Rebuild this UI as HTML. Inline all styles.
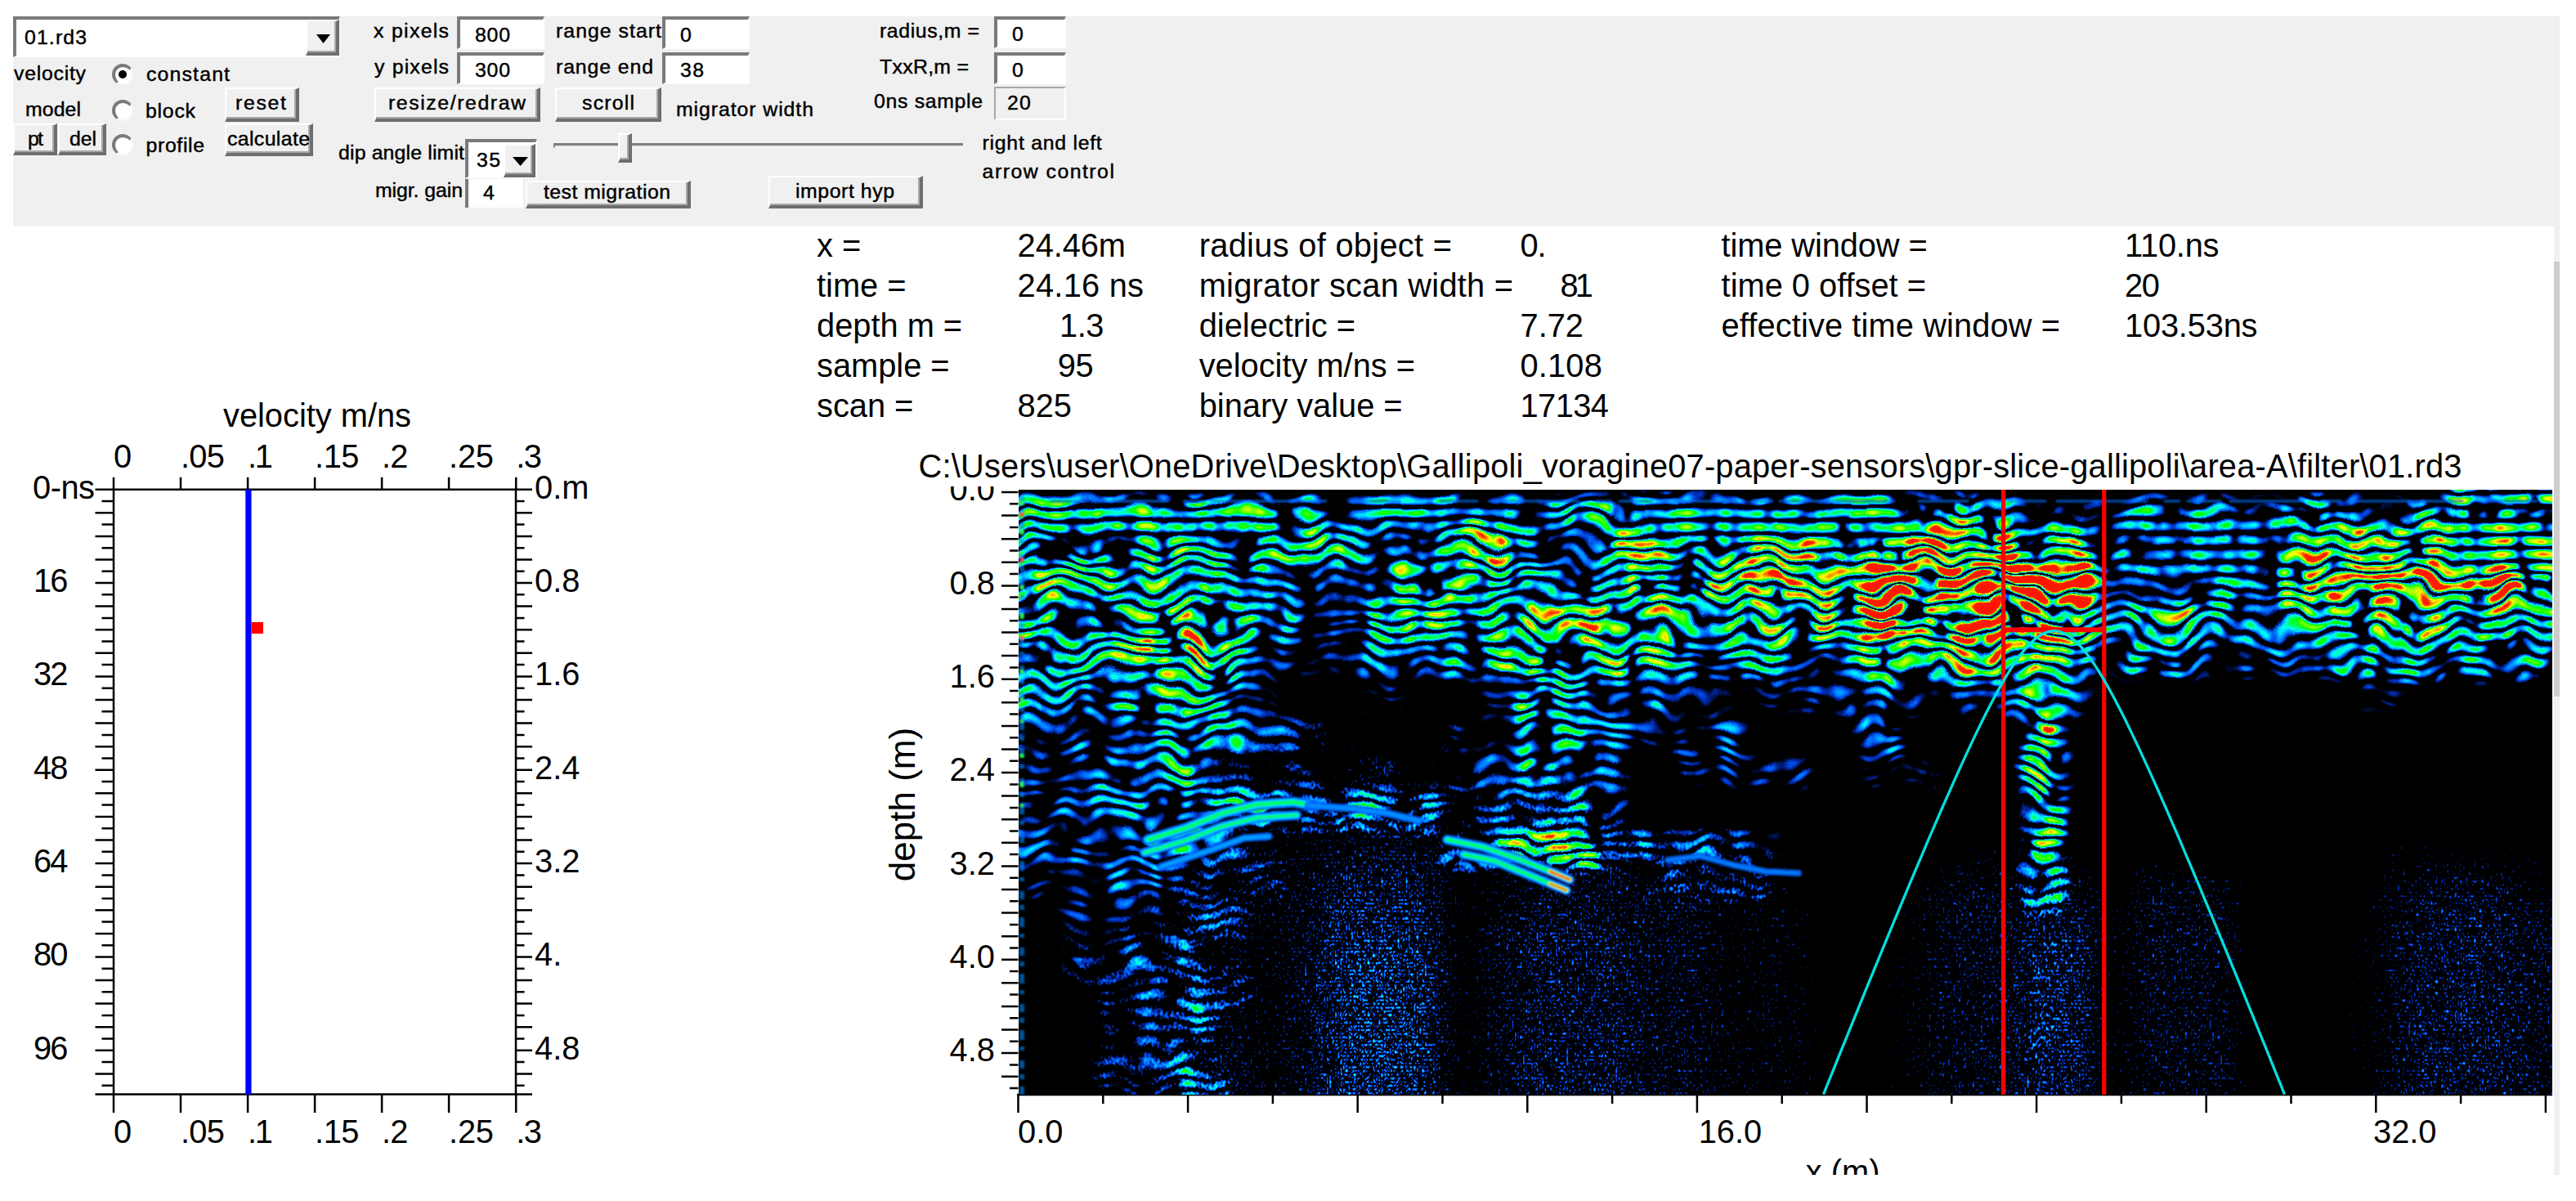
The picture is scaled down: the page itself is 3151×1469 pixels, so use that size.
<!DOCTYPE html>
<html lang="en"><head><meta charset="utf-8"><title>GPR hyperbola velocity analysis</title>
<style>
html,body{margin:0;padding:0;background:#fff;}
body{width:3151px;height:1469px;position:relative;overflow:hidden;font-family:"Liberation Sans",sans-serif;color:#000;}
#app{position:absolute;left:0;top:0;width:3151px;height:1437px;overflow:hidden;background:#fff;}
#panel{position:absolute;left:16px;top:20px;width:3115px;height:257px;background:#f0f0f0;}
.t{position:absolute;line-height:1;white-space:pre;color:#000;}
.p{-webkit-text-stroke:0.45px #000;}

.btn{position:absolute;box-sizing:border-box;background:#f0f0f0;border-style:solid;border-width:2px 4px 4px 2px;border-color:#fff #6e6e6e #6e6e6e #fff;box-shadow:inset -2px -2px 0 #a8a8a8;}
.edit{position:absolute;box-sizing:border-box;background:#fff;border-style:solid;border-width:4px 2px 2px 4px;border-color:#7a7a7a #fff #fff #7a7a7a;}
.lbl{position:absolute;box-sizing:border-box;background:#f0f0f0;border-style:solid;border-width:2px;border-color:#a8a8a8 #fff #fff #a8a8a8;}
.radio{position:absolute;box-sizing:border-box;border-radius:50%;background:#fff;border-style:solid;border-width:4px 2px 2px 4px;border-color:#7a7a7a #f8f8f8 #f8f8f8 #7a7a7a;}
.dot{position:absolute;border-radius:50%;background:#000;}
.abs{position:absolute;}
svg{position:absolute;overflow:hidden;}
svg text{font-family:"Liberation Sans",sans-serif;fill:#000;}
</style></head><body>
<div id="app">
<div id="panel"></div>
<div class="edit" style="left:16.0px;top:20.0px;width:400.0px;height:50.0px;"></div>
<div class="btn" style="left:374.0px;top:24.0px;width:41.0px;height:44.0px;"><svg width="17" height="11" style="left:11px;top:16px" viewBox="0 0 17 11"><path d="M0 0h17l-8.5 11z" fill="#000"/></svg></div>
<span class="t p" style="left:30.0px;top:33.8px;font-size:24.8px;letter-spacing:1.14px;">01.rd3</span>
<span class="t p" style="left:17.0px;top:77.8px;font-size:24.8px;letter-spacing:0.76px;">velocity</span>
<span class="t p" style="left:31.0px;top:122.2px;font-size:24.8px;letter-spacing:0.11px;">model</span>
<div class="radio" style="left:137.0px;top:77.5px;width:26.0px;height:26.0px;"></div>
<div class="dot" style="left:145.0px;top:85.5px;width:10.0px;height:10.0px;"></div>
<div class="radio" style="left:137.0px;top:122.0px;width:26.0px;height:26.0px;"></div>
<div class="radio" style="left:137.0px;top:164.0px;width:26.0px;height:26.0px;"></div>
<span class="t p" style="left:179.0px;top:79.2px;font-size:24.8px;letter-spacing:1.18px;">constant</span>
<span class="t p" style="left:178.0px;top:123.8px;font-size:24.8px;letter-spacing:0.78px;">block</span>
<span class="t p" style="left:178.6px;top:166.2px;font-size:24.8px;letter-spacing:0.64px;">profile</span>
<div class="btn" style="left:275.0px;top:107.0px;width:91.0px;height:42.0px;"></div>
<span class="t p" style="left:288.0px;top:113.8px;font-size:24.8px;letter-spacing:1.72px;">reset</span>
<div class="btn" style="left:275.0px;top:151.0px;width:108.0px;height:40.0px;"></div>
<span class="t p" style="left:278.0px;top:158.2px;font-size:24.8px;letter-spacing:0.39px;">calculate</span>
<div class="btn" style="left:16.0px;top:151.0px;width:54.0px;height:39.0px;"></div>
<span class="t p" style="left:34.0px;top:158.2px;font-size:24.8px;letter-spacing:-1.68px;">pt</span>
<div class="btn" style="left:71.0px;top:151.0px;width:59.0px;height:39.0px;"></div>
<span class="t p" style="left:85.0px;top:158.2px;font-size:24.8px;letter-spacing:-0.05px;">del</span>
<span class="t p" style="left:457.0px;top:25.8px;font-size:24.8px;letter-spacing:1.33px;">x pixels</span>
<span class="t p" style="left:458.0px;top:69.8px;font-size:24.8px;letter-spacing:1.19px;">y pixels</span>
<div class="edit" style="left:559.0px;top:20.0px;width:107.0px;height:40.0px;"></div>
<span class="t p" style="left:581.0px;top:30.6px;font-size:24.8px;letter-spacing:0.81px;">800</span>
<div class="edit" style="left:559.0px;top:64.0px;width:107.0px;height:39.0px;"></div>
<span class="t p" style="left:581.0px;top:74.2px;font-size:24.8px;letter-spacing:0.81px;">300</span>
<span class="t p" style="left:680.0px;top:25.8px;font-size:24.8px;letter-spacing:1.04px;">range start</span>
<span class="t p" style="left:680.0px;top:69.8px;font-size:24.8px;letter-spacing:0.91px;">range end</span>
<div class="edit" style="left:810.0px;top:20.0px;width:107.0px;height:40.0px;"></div>
<span class="t p" style="left:832.0px;top:30.6px;font-size:24.8px;">0</span>
<div class="edit" style="left:810.0px;top:64.0px;width:107.0px;height:39.0px;"></div>
<span class="t p" style="left:832.0px;top:74.2px;font-size:24.8px;letter-spacing:1.41px;">38</span>
<div class="btn" style="left:458.0px;top:107.0px;width:203.0px;height:42.0px;"></div>
<span class="t p" style="left:475.0px;top:114.2px;font-size:24.8px;letter-spacing:1.60px;">resize/redraw</span>
<div class="btn" style="left:679.0px;top:107.0px;width:130.0px;height:42.0px;"></div>
<span class="t p" style="left:712.0px;top:114.2px;font-size:24.8px;letter-spacing:1.23px;">scroll</span>
<span class="t p" style="left:827.0px;top:122.2px;font-size:24.8px;letter-spacing:0.94px;">migrator width</span>
<span class="t p" style="left:1076.0px;top:26.2px;font-size:24.8px;letter-spacing:0.61px;">radius,m =</span>
<span class="t p" style="left:1076.0px;top:70.2px;font-size:24.8px;letter-spacing:0.32px;">TxxR,m =</span>
<span class="t p" style="left:1069.0px;top:112.2px;font-size:24.8px;letter-spacing:0.69px;">0ns sample</span>
<div class="edit" style="left:1215.5px;top:20.0px;width:88.5px;height:39.0px;"></div>
<span class="t p" style="left:1238.0px;top:30.4px;font-size:24.8px;">0</span>
<div class="edit" style="left:1215.5px;top:64.0px;width:88.5px;height:38.6px;"></div>
<span class="t p" style="left:1238.0px;top:74.2px;font-size:24.8px;">0</span>
<div class="lbl" style="left:1215.5px;top:106.0px;width:88.5px;height:41.0px;"></div>
<span class="t p" style="left:1232.0px;top:114.2px;font-size:24.8px;letter-spacing:1.11px;">20</span>
<span class="t p" style="left:414.0px;top:175.2px;font-size:24.8px;letter-spacing:0.17px;">dip angle limit</span>
<div class="edit" style="left:569.0px;top:170.0px;width:88.0px;height:48.0px;"></div>
<div class="btn" style="left:616.0px;top:176.0px;width:39.0px;height:41.0px;"><svg width="19" height="11" style="left:9px;top:14px" viewBox="0 0 19 11"><path d="M0 0h19l-9.5 11z" fill="#000"/></svg></div>
<span class="t p" style="left:583.0px;top:184.2px;font-size:24.8px;letter-spacing:1.41px;">35</span>
<div class="abs" style="left:677.0px;top:175.0px;width:501.0px;height:6.0px;background:#e4e4e4;border-top:3px solid #808080;border-left:2px solid #808080;box-sizing:border-box;border-bottom:1px solid #fff;"></div>
<div class="btn" style="left:756.0px;top:163.0px;width:17.0px;height:36.0px;"></div>
<span class="t p" style="left:1201.6px;top:163.2px;font-size:24.8px;letter-spacing:0.74px;">right and left</span>
<span class="t p" style="left:1201.6px;top:197.5px;font-size:24.8px;letter-spacing:1.50px;">arrow control</span>
<span class="t p" style="left:459.0px;top:221.2px;font-size:24.8px;letter-spacing:-0.06px;">migr. gain</span>
<div class="edit" style="left:569.0px;top:219.0px;width:71.0px;height:35.0px;border-top-width:0;border-bottom-width:0;"></div>
<span class="t p" style="left:591.0px;top:224.2px;font-size:24.8px;">4</span>
<div class="btn" style="left:643.0px;top:221.0px;width:202.0px;height:34.0px;"></div>
<span class="t p" style="left:665.0px;top:223.2px;font-size:24.8px;letter-spacing:0.47px;">test migration</span>
<div class="btn" style="left:940.0px;top:215.0px;width:189.0px;height:40.0px;"></div>
<span class="t p" style="left:973.0px;top:221.6px;font-size:24.8px;letter-spacing:0.58px;">import hyp</span>
<div class="abs" style="left:3124.0px;top:277.0px;width:7.0px;height:1160.0px;background:#f0f0f0;"></div>
<div class="abs" style="left:3124.0px;top:320.0px;width:7.0px;height:532.0px;background:#cdcdcd;"></div>
<span class="t" style="left:999.0px;top:281.3px;font-size:39.8px;">x =</span>
<span class="t" style="left:999.0px;top:330.2px;font-size:39.8px;">time =</span>
<span class="t" style="left:999.0px;top:379.2px;font-size:39.8px;">depth m =</span>
<span class="t" style="left:999.0px;top:428.0px;font-size:39.8px;">sample =</span>
<span class="t" style="left:999.0px;top:477.0px;font-size:39.8px;">scan =</span>
<span class="t" style="left:1244.6px;top:281.3px;font-size:39.8px;letter-spacing:-0.07px;">24.46m</span>
<span class="t" style="left:1244.6px;top:330.2px;font-size:39.8px;letter-spacing:0.25px;">24.16 ns</span>
<span class="t" style="left:1296.0px;top:379.2px;font-size:39.8px;letter-spacing:-0.41px;">1.3</span>
<span class="t" style="left:1293.7px;top:428.0px;font-size:39.8px;letter-spacing:-0.27px;">95</span>
<span class="t" style="left:1244.6px;top:477.0px;font-size:39.8px;letter-spacing:-0.10px;">825</span>
<span class="t" style="left:1466.7px;top:281.3px;font-size:39.8px;letter-spacing:0.30px;">radius of object =</span>
<span class="t" style="left:1466.7px;top:330.2px;font-size:39.8px;letter-spacing:0.25px;">migrator scan width =</span>
<span class="t" style="left:1466.7px;top:379.2px;font-size:39.8px;">dielectric =</span>
<span class="t" style="left:1466.7px;top:428.0px;font-size:39.8px;">velocity m/ns =</span>
<span class="t" style="left:1466.7px;top:477.0px;font-size:39.8px;">binary value =</span>
<span class="t" style="left:1859.5px;top:281.3px;font-size:39.8px;letter-spacing:-1.19px;">0.</span>
<span class="t" style="left:1908.6px;top:330.2px;font-size:39.8px;letter-spacing:-3.87px;">81</span>
<span class="t" style="left:1859.5px;top:379.2px;font-size:39.8px;letter-spacing:0.01px;">7.72</span>
<span class="t" style="left:1859.5px;top:428.0px;font-size:39.8px;letter-spacing:0.18px;">0.108</span>
<span class="t" style="left:1859.5px;top:477.0px;font-size:39.8px;letter-spacing:-0.54px;">17134</span>
<span class="t" style="left:2105.6px;top:281.3px;font-size:39.8px;letter-spacing:-0.10px;">time window =</span>
<span class="t" style="left:2105.6px;top:330.2px;font-size:39.8px;">time 0 offset =</span>
<span class="t" style="left:2105.6px;top:379.2px;font-size:39.8px;letter-spacing:0.12px;">effective time window =</span>
<span class="t" style="left:2599.0px;top:281.3px;font-size:39.8px;letter-spacing:-0.21px;">110.ns</span>
<span class="t" style="left:2599.0px;top:330.2px;font-size:39.8px;letter-spacing:-1.27px;">20</span>
<span class="t" style="left:2599.0px;top:379.2px;font-size:39.8px;letter-spacing:-0.18px;">103.53ns</span>
<svg width="800" height="1000" style="left:0;top:470px" viewBox="0 470 800 1000"><path d="M139 598.7H631V1338.6H139Z" fill="#fff" stroke="#000" stroke-width="2.5"/><path d="M139.0 583.7V598.7M139.0 1338.6V1361.1M221.0 583.7V598.7M221.0 1338.6V1361.1M303.1 583.7V598.7M303.1 1338.6V1361.1M385.1 583.7V598.7M385.1 1338.6V1361.1M467.1 583.7V598.7M467.1 1338.6V1361.1M549.1 583.7V598.7M549.1 1338.6V1361.1M631.2 583.7V598.7M631.2 1338.6V1361.1M116.5 598.7H139M631 598.7H651M124.5 613.0H139M631 613.0H641.5M116.5 627.3H139M631 627.3H651M124.5 641.6H139M631 641.6H641.5M116.5 655.9H139M631 655.9H651M124.5 670.2H139M631 670.2H641.5M116.5 684.5H139M631 684.5H651M124.5 698.8H139M631 698.8H641.5M116.5 713.1H139M631 713.1H651M124.5 727.3H139M631 727.3H641.5M116.5 741.6H139M631 741.6H651M124.5 755.9H139M631 755.9H641.5M116.5 770.2H139M631 770.2H651M124.5 784.5H139M631 784.5H641.5M116.5 798.8H139M631 798.8H651M124.5 813.1H139M631 813.1H641.5M116.5 827.4H139M631 827.4H651M124.5 841.7H139M631 841.7H641.5M116.5 856.0H139M631 856.0H651M124.5 870.3H139M631 870.3H641.5M116.5 884.6H139M631 884.6H651M124.5 898.9H139M631 898.9H641.5M116.5 913.2H139M631 913.2H651M124.5 927.5H139M631 927.5H641.5M116.5 941.8H139M631 941.8H651M124.5 956.1H139M631 956.1H641.5M116.5 970.3H139M631 970.3H651M124.5 984.6H139M631 984.6H641.5M116.5 998.9H139M631 998.9H651M124.5 1013.2H139M631 1013.2H641.5M116.5 1027.5H139M631 1027.5H651M124.5 1041.8H139M631 1041.8H641.5M116.5 1056.1H139M631 1056.1H651M124.5 1070.4H139M631 1070.4H641.5M116.5 1084.7H139M631 1084.7H651M124.5 1099.0H139M631 1099.0H641.5M116.5 1113.3H139M631 1113.3H651M124.5 1127.6H139M631 1127.6H641.5M116.5 1141.9H139M631 1141.9H651M124.5 1156.2H139M631 1156.2H641.5M116.5 1170.5H139M631 1170.5H651M124.5 1184.8H139M631 1184.8H641.5M116.5 1199.0H139M631 1199.0H651M124.5 1213.3H139M631 1213.3H641.5M116.5 1227.6H139M631 1227.6H651M124.5 1241.9H139M631 1241.9H641.5M116.5 1256.2H139M631 1256.2H651M124.5 1270.5H139M631 1270.5H641.5M116.5 1284.8H139M631 1284.8H651M124.5 1299.1H139M631 1299.1H641.5M116.5 1313.4H139M631 1313.4H651M124.5 1327.7H139M631 1327.7H641.5M116.5 1338.6H139M631 1338.6H651" stroke="#000" stroke-width="2.5" fill="none"/><rect x="300.3" y="598.7" width="7.2" height="739.9" fill="#0000ff"/><rect x="307.5" y="761" width="14.5" height="14" fill="#ff0000"/></svg>
<span class="t" style="left:273.0px;top:489.1px;font-size:39.8px;letter-spacing:-0.00px;">velocity m/ns</span>
<span class="t" style="left:139.0px;top:538.8px;font-size:39.8px;">0</span>
<span class="t" style="left:139.0px;top:1365.1px;font-size:39.8px;">0</span>
<span class="t" style="left:221.0px;top:538.8px;font-size:39.8px;letter-spacing:-0.78px;">.05</span>
<span class="t" style="left:221.0px;top:1365.1px;font-size:39.8px;letter-spacing:-0.78px;">.05</span>
<span class="t" style="left:303.1px;top:538.8px;font-size:39.8px;letter-spacing:-2.45px;">.1</span>
<span class="t" style="left:303.1px;top:1365.1px;font-size:39.8px;letter-spacing:-2.45px;">.1</span>
<span class="t" style="left:385.1px;top:538.8px;font-size:39.8px;letter-spacing:-0.51px;">.15</span>
<span class="t" style="left:385.1px;top:1365.1px;font-size:39.8px;letter-spacing:-0.51px;">.15</span>
<span class="t" style="left:467.1px;top:538.8px;font-size:39.8px;letter-spacing:-0.91px;">.2</span>
<span class="t" style="left:467.1px;top:1365.1px;font-size:39.8px;letter-spacing:-0.91px;">.2</span>
<span class="t" style="left:549.1px;top:538.8px;font-size:39.8px;letter-spacing:-0.24px;">.25</span>
<span class="t" style="left:549.1px;top:1365.1px;font-size:39.8px;letter-spacing:-0.24px;">.25</span>
<span class="t" style="left:631.2px;top:538.8px;font-size:39.8px;letter-spacing:-1.37px;">.3</span>
<span class="t" style="left:631.2px;top:1365.1px;font-size:39.8px;letter-spacing:-1.37px;">.3</span>
<span class="t" style="left:40.0px;top:577.3px;font-size:39.8px;letter-spacing:-0.47px;">0-ns</span>
<span class="t" style="left:41.0px;top:690.9px;font-size:39.8px;letter-spacing:-1.77px;">16</span>
<span class="t" style="left:41.0px;top:805.2px;font-size:39.8px;letter-spacing:-1.77px;">32</span>
<span class="t" style="left:41.0px;top:919.6px;font-size:39.8px;letter-spacing:-1.77px;">48</span>
<span class="t" style="left:41.0px;top:1033.9px;font-size:39.8px;letter-spacing:-1.77px;">64</span>
<span class="t" style="left:41.0px;top:1148.3px;font-size:39.8px;letter-spacing:-1.77px;">80</span>
<span class="t" style="left:41.0px;top:1262.6px;font-size:39.8px;letter-spacing:-1.77px;">96</span>
<span class="t" style="left:654.0px;top:577.3px;font-size:39.8px;">0.m</span>
<span class="t" style="left:654.0px;top:690.9px;font-size:39.8px;">0.8</span>
<span class="t" style="left:654.0px;top:805.2px;font-size:39.8px;">1.6</span>
<span class="t" style="left:654.0px;top:919.6px;font-size:39.8px;">2.4</span>
<span class="t" style="left:654.0px;top:1033.9px;font-size:39.8px;">3.2</span>
<span class="t" style="left:654.0px;top:1148.3px;font-size:39.8px;">4.</span>
<span class="t" style="left:654.0px;top:1262.6px;font-size:39.8px;">4.8</span>
<svg width="2100" height="900" style="left:1100px;top:560px" viewBox="1100 560 2100 900"><path d="M1225 602.0H1245.5M1235 616.3H1245.5M1225 630.6H1245.5M1235 644.9H1245.5M1225 659.2H1245.5M1235 673.5H1245.5M1225 687.8H1245.5M1235 702.1H1245.5M1225 716.4H1245.5M1235 730.6H1245.5M1225 744.9H1245.5M1235 759.2H1245.5M1225 773.5H1245.5M1235 787.8H1245.5M1225 802.1H1245.5M1235 816.4H1245.5M1225 830.7H1245.5M1235 845.0H1245.5M1225 859.3H1245.5M1235 873.6H1245.5M1225 887.9H1245.5M1235 902.2H1245.5M1225 916.5H1245.5M1235 930.8H1245.5M1225 945.1H1245.5M1235 959.4H1245.5M1225 973.6H1245.5M1235 987.9H1245.5M1225 1002.2H1245.5M1235 1016.5H1245.5M1225 1030.8H1245.5M1235 1045.1H1245.5M1225 1059.4H1245.5M1235 1073.7H1245.5M1225 1088.0H1245.5M1235 1102.3H1245.5M1225 1116.6H1245.5M1235 1130.9H1245.5M1225 1145.2H1245.5M1235 1159.5H1245.5M1225 1173.8H1245.5M1235 1188.1H1245.5M1225 1202.3H1245.5M1235 1216.6H1245.5M1225 1230.9H1245.5M1235 1245.2H1245.5M1225 1259.5H1245.5M1235 1273.8H1245.5M1225 1288.1H1245.5M1235 1302.4H1245.5M1225 1316.7H1245.5M1235 1331.0H1245.5M1245.5 1338.6V1361.1M1349.3 1338.6V1350.1M1453.1 1338.6V1361.1M1556.9 1338.6V1350.1M1660.7 1338.6V1361.1M1764.5 1338.6V1350.1M1868.3 1338.6V1361.1M1972.1 1338.6V1350.1M2075.9 1338.6V1361.1M2179.7 1338.6V1350.1M2283.5 1338.6V1361.1M2387.3 1338.6V1350.1M2491.1 1338.6V1361.1M2594.9 1338.6V1350.1M2698.7 1338.6V1361.1M2802.5 1338.6V1350.1M2906.3 1338.6V1361.1M3010.1 1338.6V1350.1M3113.9 1338.6V1361.1M1244.0 1339.1H3122" stroke="#000" stroke-width="2.5" fill="none"/></svg>
<span class="t" style="left:1161.4px;top:579.1px;font-size:39.8px;letter-spacing:0.14px;">0.0</span>
<span class="t" style="left:1161.4px;top:693.5px;font-size:39.8px;letter-spacing:0.14px;">0.8</span>
<span class="t" style="left:1161.4px;top:807.8px;font-size:39.8px;letter-spacing:0.14px;">1.6</span>
<span class="t" style="left:1161.4px;top:922.2px;font-size:39.8px;letter-spacing:0.14px;">2.4</span>
<span class="t" style="left:1161.4px;top:1036.5px;font-size:39.8px;letter-spacing:0.14px;">3.2</span>
<span class="t" style="left:1161.4px;top:1150.9px;font-size:39.8px;letter-spacing:0.14px;">4.0</span>
<span class="t" style="left:1161.4px;top:1265.2px;font-size:39.8px;letter-spacing:0.14px;">4.8</span>
<div class="abs" style="left:1120.0px;top:550.0px;width:2003.0px;height:44.7px;background:#fff;"></div>
<span class="t" style="left:1123.6px;top:550.9px;font-size:39.8px;letter-spacing:0.20px;">C:\Users\user\OneDrive\Desktop\Gallipoli_voragine07-paper-sensors\gpr-slice-gallipoli\area-A\filter\01.rd3</span>
<span class="t" style="left:1245.0px;top:1364.9px;font-size:39.8px;">0.0</span>
<span class="t" style="left:2077.7px;top:1364.9px;font-size:39.8px;">16.0</span>
<span class="t" style="left:2903.0px;top:1364.9px;font-size:39.8px;">32.0</span>
<span class="t" style="left:2208.7px;top:1414.3px;font-size:39.8px;letter-spacing:0.04px;">x (m)</span>
<span class="t" style="left:1104px;top:983.7px;font-size:44px;transform:translate(-50%,-50%) rotate(-90deg);">depth (m)</span>
<svg width="1876.5" height="739.9" style="left:1245.5px;top:598.7px;background:#000" viewBox="0 0 1876.5 739.9"><defs><filter id="gpr" filterUnits="userSpaceOnUse" x="-100" y="-100" width="2076.5" height="939.9" color-interpolation-filters="sRGB">
<feGaussianBlur in="SourceGraphic" stdDeviation="12 8" result="env"/>
<feColorMatrix in="env" type="matrix" values="1 0 0 0 0 1 0 0 0 0 1 0 0 0 0 0 0 0 0 1" result="e1"/>
<feColorMatrix in="env" type="matrix" values="0 1 0 0 0 0 1 0 0 0 0 1 0 0 0 0 0 0 0 1" result="e2a"/>
<feGaussianBlur in="e2a" stdDeviation="16 22" result="e2"/>
<feFlood flood-color="#fff" x="-100" y="-100" width="2076.5" height="17.5" result="f"/>
<feOffset in="f" dx="0" dy="0" x="-100" y="-100" width="2076.5" height="35.0" result="cell"/>
<feTile in="cell" result="tile"/>
<feColorMatrix in="tile" type="matrix" values="1 0 0 0 0 1 0 0 0 0 1 0 0 0 0 0 0 0 0 1" result="sq"/>
<feGaussianBlur in="sq" stdDeviation="0 5" result="sn0"/>
<feComponentTransfer in="sn0" result="sn"><feFuncR type="table" tableValues="0.000 0.042 0.082 0.121 0.158 0.193 0.227 0.260 0.290 0.319 0.346 0.371 0.395 0.416 0.435 0.453 0.468 0.480 0.490 0.497 0.500 0.503 0.510 0.520 0.532 0.547 0.565 0.584 0.605 0.629 0.654 0.681 0.710 0.740 0.773 0.807 0.842 0.879 0.918 0.958 1.000"/><feFuncG type="table" tableValues="0.000 0.042 0.082 0.121 0.158 0.193 0.227 0.260 0.290 0.319 0.346 0.371 0.395 0.416 0.435 0.453 0.468 0.480 0.490 0.497 0.500 0.503 0.510 0.520 0.532 0.547 0.565 0.584 0.605 0.629 0.654 0.681 0.710 0.740 0.773 0.807 0.842 0.879 0.918 0.958 1.000"/><feFuncB type="table" tableValues="0.000 0.042 0.082 0.121 0.158 0.193 0.227 0.260 0.290 0.319 0.346 0.371 0.395 0.416 0.435 0.453 0.468 0.480 0.490 0.497 0.500 0.503 0.510 0.520 0.532 0.547 0.565 0.584 0.605 0.629 0.654 0.681 0.710 0.740 0.773 0.807 0.842 0.879 0.918 0.958 1.000"/></feComponentTransfer>
<feTurbulence type="fractalNoise" baseFrequency="0.016 0.012" numOctaves="2" seed="3" result="d"/>
<feColorMatrix in="d" type="matrix" values="1 0 0 0 0 0 1 0 0 0 0 0 1 0 0 0 0 0 0 1" result="dO"/>
<feColorMatrix in="env" type="matrix" values="0 0 -1 0 1 0 0 -1 0 1 0 0 -1 0 1 0 0 0 0 1" result="fm"/>
<feComposite in="dO" in2="fm" operator="arithmetic" k1="1" k2="0" k3="-0.5" k4="0.5" result="dF"/>
<feDisplacementMap in="sn" in2="dF" scale="55" xChannelSelector="G" yChannelSelector="R" result="t1d"/>
<feColorMatrix in="t1d" type="matrix" values="1 0 0 0 0 1 0 0 0 0 1 0 0 0 0 0 0 0 0 1" result="n1"/>
<feTurbulence type="fractalNoise" baseFrequency="0.035 0.022" numOctaves="2" seed="5" result="tm"/>
<feColorMatrix in="tm" type="matrix" values="2 0 0 0 -0.5 2 0 0 0 -0.5 2 0 0 0 -0.5 0 0 0 0 1" result="m"/>
<feComposite in="e1" in2="m" operator="arithmetic" k1="1" k2="0" k3="0" k4="0" result="e1m"/>
<feTurbulence type="fractalNoise" baseFrequency="0.3 0.22" numOctaves="1" seed="11" result="t2"/>
<feColorMatrix in="t2" type="matrix" values="1 0 0 0 0 1 0 0 0 0 1 0 0 0 0 0 0 0 0 1" result="n2"/>
<feComposite in="n1" in2="e1m" operator="arithmetic" k1="1.65" k2="0" k3="-0.825" k4="0.5" result="s1"/>
<feComposite in="n2" in2="e2" operator="arithmetic" k1="3.0" k2="0" k3="-1.5" k4="0.5" result="s2"/>
<feComposite in="s1" in2="s2" operator="arithmetic" k1="0" k2="1" k3="1" k4="-0.5" result="s"/>
<feComponentTransfer in="s"><feFuncR type="table" tableValues="1 1 1 1 1 1 1 1 1 1 1 1 1 1 1 1 1 1 1 1 1 1 1 1 1 1 1 1 1 1 1 1 1 1 1 1 1 1 1 1 1 1 1 1 1 1 1 1 1 1 1 1 1 1 1 1 1 1 1 1 1 1 1 1 1 1 1 0.925 0.851 0.776 0.702 0.627 0.549 0.471 0.392 0.314 0.235 0.157 0.078 0 0 0 0 0 0 0 0 0 0 0 0 0 0 0 0 0 0 0 0 0 0 0 0 0 0 0 0 0 0 0 0 0 0 0 0 0 0 0 0 0 0 0 0.078 0.157 0.235 0.314 0.392 0.471 0.549 0.627 0.702 0.776 0.851 0.925 1 1 1 1 1 1 1 1 1 1 1 1 1 1 1 1 1 1 1 1 1 1 1 1 1 1 1 1 1 1 1 1 1 1 1 1 1 1 1 1 1 1 1 1 1 1 1 1 1 1 1 1 1 1 1 1 1 1 1 1 1 1 1 1 1 1 1"/><feFuncG type="table" tableValues="0.078 0.079 0.08 0.081 0.081 0.082 0.083 0.084 0.084 0.085 0.086 0.087 0.087 0.088 0.089 0.09 0.09 0.091 0.092 0.092 0.093 0.094 0.095 0.095 0.096 0.097 0.098 0.098 0.099 0.1 0.101 0.101 0.102 0.103 0.104 0.104 0.105 0.106 0.107 0.107 0.108 0.109 0.11 0.11 0.111 0.112 0.112 0.113 0.114 0.115 0.115 0.116 0.117 0.118 0.179 0.241 0.303 0.364 0.426 0.487 0.549 0.624 0.699 0.775 0.85 0.925 1 1 1 1 1 1 1 1 1 1 1 1 1 1 1 1 1 1 1 1 1 0.892 0.784 0.675 0.566 0.458 0.353 0.255 0.157 0.092 0.026 0 0 0 0 0 0 0 0.026 0.092 0.157 0.255 0.353 0.458 0.566 0.675 0.784 0.892 1 1 1 1 1 1 1 1 1 1 1 1 1 1 1 1 1 1 1 1 1 0.925 0.85 0.775 0.699 0.624 0.549 0.487 0.426 0.364 0.303 0.241 0.179 0.118 0.117 0.116 0.115 0.115 0.114 0.113 0.112 0.112 0.111 0.11 0.11 0.109 0.108 0.107 0.107 0.106 0.105 0.104 0.104 0.103 0.102 0.101 0.101 0.1 0.099 0.098 0.098 0.097 0.096 0.095 0.095 0.094 0.093 0.092 0.092 0.091 0.09 0.09 0.089 0.088 0.087 0.087 0.086 0.085 0.084 0.084 0.083 0.082 0.081 0.081 0.08 0.079 0.078"/><feFuncB type="table" tableValues="0 0 0 0 0 0 0 0 0 0 0 0 0 0 0 0 0 0 0 0 0 0 0 0 0 0 0 0 0 0 0 0 0 0 0 0 0 0 0 0 0 0 0 0 0 0 0 0 0 0 0 0 0 0 0 0 0 0 0 0 0 0 0 0 0 0 0 0 0 0 0 0 0 0 0 0 0 0 0 0 0.115 0.231 0.346 0.493 0.662 0.831 1 1 1 1 1 1 0.944 0.806 0.667 0.389 0.111 0 0 0 0 0 0 0 0.111 0.389 0.667 0.806 0.944 1 1 1 1 1 1 0.831 0.662 0.493 0.346 0.231 0.115 0 0 0 0 0 0 0 0 0 0 0 0 0 0 0 0 0 0 0 0 0 0 0 0 0 0 0 0 0 0 0 0 0 0 0 0 0 0 0 0 0 0 0 0 0 0 0 0 0 0 0 0 0 0 0 0 0 0 0 0 0 0 0 0 0 0 0 0 0 0 0 0 0 0 0 0 0 0 0 0"/></feComponentTransfer>
</filter><filter id="soft"><feGaussianBlur stdDeviation="1.3"/></filter></defs><g filter="url(#gpr)"><rect x="-100" y="-100" width="2076" height="940" fill="#000"/><rect x="-100" y="10" width="194" height="36" fill="rgb(66,0,0)"/><rect x="94" y="10" width="47" height="36" fill="rgb(89,0,0)"/><rect x="141" y="10" width="188" height="36" fill="rgb(46,0,0)"/><rect x="328" y="10" width="47" height="36" fill="rgb(66,0,0)"/><rect x="375" y="10" width="141" height="36" fill="rgb(28,0,0)"/><rect x="516" y="10" width="47" height="36" fill="rgb(46,0,0)"/><rect x="563" y="10" width="47" height="36" fill="rgb(66,0,0)"/><rect x="610" y="10" width="47" height="36" fill="rgb(28,0,0)"/><rect x="657" y="10" width="47" height="36" fill="rgb(46,0,0)"/><rect x="704" y="10" width="281" height="36" fill="rgb(89,0,0)"/><rect x="985" y="10" width="47" height="36" fill="rgb(46,0,0)"/><rect x="1032" y="10" width="47" height="36" fill="rgb(66,0,0)"/><rect x="1079" y="10" width="47" height="36" fill="rgb(89,0,0)"/><rect x="1126" y="10" width="47" height="36" fill="rgb(115,0,0)"/><rect x="1173" y="10" width="47" height="36" fill="rgb(46,0,0)"/><rect x="1220" y="10" width="94" height="36" fill="rgb(28,0,0)"/><rect x="1314" y="10" width="47" height="36" fill="rgb(17,0,0)"/><rect x="1360" y="10" width="141" height="36" fill="rgb(46,0,0)"/><rect x="1501" y="10" width="47" height="36" fill="rgb(28,0,0)"/><rect x="1548" y="10" width="94" height="36" fill="rgb(66,0,0)"/><rect x="1642" y="10" width="47" height="36" fill="rgb(28,0,0)"/><rect x="1689" y="10" width="94" height="36" fill="rgb(66,0,0)"/><rect x="1783" y="10" width="194" height="36" fill="rgb(89,0,0)"/><rect x="-100" y="46" width="147" height="46" fill="rgb(66,0,0)"/><rect x="47" y="46" width="47" height="46" fill="rgb(89,0,0)"/><rect x="94" y="46" width="47" height="46" fill="rgb(46,0,0)"/><rect x="141" y="46" width="94" height="46" fill="rgb(66,0,0)"/><rect x="235" y="46" width="47" height="46" fill="rgb(46,0,0)"/><rect x="281" y="46" width="141" height="46" fill="rgb(66,0,0)"/><rect x="422" y="46" width="94" height="46" fill="rgb(46,0,0)"/><rect x="516" y="46" width="47" height="46" fill="rgb(89,0,0)"/><rect x="563" y="46" width="47" height="46" fill="rgb(115,0,0)"/><rect x="610" y="46" width="47" height="46" fill="rgb(46,0,0)"/><rect x="657" y="46" width="47" height="46" fill="rgb(28,0,0)"/><rect x="704" y="46" width="94" height="46" fill="rgb(89,0,0)"/><rect x="798" y="46" width="47" height="46" fill="rgb(46,0,0)"/><rect x="844" y="46" width="47" height="46" fill="rgb(89,0,0)"/><rect x="891" y="46" width="47" height="46" fill="rgb(143,0,0)"/><rect x="938" y="46" width="47" height="46" fill="rgb(115,0,0)"/><rect x="985" y="46" width="47" height="46" fill="rgb(89,0,0)"/><rect x="1032" y="46" width="47" height="46" fill="rgb(191,0,0)"/><rect x="1079" y="46" width="94" height="46" fill="rgb(143,0,0)"/><rect x="1173" y="46" width="47" height="46" fill="rgb(191,0,0)"/><rect x="1220" y="46" width="47" height="46" fill="rgb(66,0,0)"/><rect x="1267" y="46" width="47" height="46" fill="rgb(89,0,0)"/><rect x="1314" y="46" width="47" height="46" fill="rgb(28,0,0)"/><rect x="1360" y="46" width="141" height="46" fill="rgb(66,0,0)"/><rect x="1501" y="46" width="47" height="46" fill="rgb(46,0,0)"/><rect x="1548" y="46" width="47" height="46" fill="rgb(89,0,0)"/><rect x="1595" y="46" width="381" height="46" fill="rgb(115,0,0)"/><rect x="-100" y="92" width="147" height="46" fill="rgb(89,0,0)"/><rect x="47" y="92" width="47" height="46" fill="rgb(46,0,0)"/><rect x="94" y="92" width="94" height="46" fill="rgb(66,0,0)"/><rect x="188" y="92" width="47" height="46" fill="rgb(89,0,0)"/><rect x="235" y="92" width="141" height="46" fill="rgb(46,0,0)"/><rect x="375" y="92" width="47" height="46" fill="rgb(28,0,0)"/><rect x="422" y="92" width="47" height="46" fill="rgb(66,0,0)"/><rect x="469" y="92" width="94" height="46" fill="rgb(89,0,0)"/><rect x="563" y="92" width="94" height="46" fill="rgb(66,0,0)"/><rect x="657" y="92" width="47" height="46" fill="rgb(46,0,0)"/><rect x="704" y="92" width="47" height="46" fill="rgb(66,0,0)"/><rect x="751" y="92" width="47" height="46" fill="rgb(115,0,0)"/><rect x="798" y="92" width="47" height="46" fill="rgb(66,0,0)"/><rect x="844" y="92" width="47" height="46" fill="rgb(115,0,0)"/><rect x="891" y="92" width="47" height="46" fill="rgb(143,0,0)"/><rect x="938" y="92" width="47" height="46" fill="rgb(115,0,0)"/><rect x="985" y="92" width="47" height="46" fill="rgb(89,0,0)"/><rect x="1032" y="92" width="47" height="46" fill="rgb(255,0,0)"/><rect x="1079" y="92" width="47" height="46" fill="rgb(143,0,0)"/><rect x="1126" y="92" width="47" height="46" fill="rgb(191,0,0)"/><rect x="1173" y="92" width="141" height="46" fill="rgb(255,0,0)"/><rect x="1314" y="92" width="141" height="46" fill="rgb(28,0,0)"/><rect x="1454" y="92" width="94" height="46" fill="rgb(46,0,0)"/><rect x="1548" y="92" width="47" height="46" fill="rgb(143,0,0)"/><rect x="1595" y="92" width="94" height="46" fill="rgb(115,0,0)"/><rect x="1689" y="92" width="47" height="46" fill="rgb(143,0,0)"/><rect x="1736" y="92" width="47" height="46" fill="rgb(115,0,0)"/><rect x="1783" y="92" width="47" height="46" fill="rgb(191,0,0)"/><rect x="1830" y="92" width="147" height="46" fill="rgb(143,0,0)"/><rect x="-100" y="139" width="147" height="46" fill="rgb(66,0,0)"/><rect x="47" y="139" width="47" height="46" fill="rgb(46,0,0)"/><rect x="94" y="139" width="47" height="46" fill="rgb(66,0,0)"/><rect x="141" y="139" width="47" height="46" fill="rgb(89,0,0)"/><rect x="188" y="139" width="47" height="46" fill="rgb(115,0,0)"/><rect x="235" y="139" width="47" height="46" fill="rgb(89,0,0)"/><rect x="281" y="139" width="47" height="46" fill="rgb(46,0,0)"/><rect x="328" y="139" width="47" height="46" fill="rgb(28,0,0)"/><rect x="375" y="139" width="47" height="46" fill="rgb(17,0,0)"/><rect x="422" y="139" width="47" height="46" fill="rgb(66,0,0)"/><rect x="469" y="139" width="47" height="46" fill="rgb(89,0,0)"/><rect x="516" y="139" width="47" height="46" fill="rgb(46,0,0)"/><rect x="563" y="139" width="47" height="46" fill="rgb(66,0,0)"/><rect x="610" y="139" width="94" height="46" fill="rgb(89,0,0)"/><rect x="704" y="139" width="47" height="46" fill="rgb(115,0,0)"/><rect x="751" y="139" width="47" height="46" fill="rgb(89,0,0)"/><rect x="798" y="139" width="94" height="46" fill="rgb(66,0,0)"/><rect x="891" y="139" width="47" height="46" fill="rgb(115,0,0)"/><rect x="938" y="139" width="94" height="46" fill="rgb(89,0,0)"/><rect x="1032" y="139" width="47" height="46" fill="rgb(255,0,0)"/><rect x="1079" y="139" width="47" height="46" fill="rgb(143,0,0)"/><rect x="1126" y="139" width="47" height="46" fill="rgb(191,0,0)"/><rect x="1173" y="139" width="94" height="46" fill="rgb(255,0,0)"/><rect x="1267" y="139" width="47" height="46" fill="rgb(191,0,0)"/><rect x="1314" y="139" width="47" height="46" fill="rgb(28,0,0)"/><rect x="1360" y="139" width="94" height="46" fill="rgb(89,0,0)"/><rect x="1454" y="139" width="94" height="46" fill="rgb(46,0,0)"/><rect x="1548" y="139" width="47" height="46" fill="rgb(66,0,0)"/><rect x="1595" y="139" width="94" height="46" fill="rgb(89,0,0)"/><rect x="1689" y="139" width="47" height="46" fill="rgb(115,0,0)"/><rect x="1736" y="139" width="47" height="46" fill="rgb(66,0,0)"/><rect x="1783" y="139" width="47" height="46" fill="rgb(89,0,0)"/><rect x="1830" y="139" width="147" height="46" fill="rgb(66,0,0)"/><rect x="-100" y="185" width="241" height="46" fill="rgb(66,0,0)"/><rect x="141" y="185" width="47" height="46" fill="rgb(89,0,0)"/><rect x="188" y="185" width="47" height="46" fill="rgb(115,0,0)"/><rect x="235" y="185" width="47" height="46" fill="rgb(66,0,0)"/><rect x="281" y="185" width="47" height="46" fill="rgb(28,0,0)"/><rect x="328" y="185" width="94" height="46" fill="rgb(17,0,0)"/><rect x="422" y="185" width="47" height="46" fill="rgb(46,0,0)"/><rect x="469" y="185" width="47" height="46" fill="rgb(28,0,0)"/><rect x="516" y="185" width="47" height="46" fill="rgb(46,0,0)"/><rect x="563" y="185" width="47" height="46" fill="rgb(66,0,0)"/><rect x="610" y="185" width="47" height="46" fill="rgb(89,0,0)"/><rect x="657" y="185" width="47" height="46" fill="rgb(46,0,0)"/><rect x="704" y="185" width="47" height="46" fill="rgb(89,0,0)"/><rect x="751" y="185" width="47" height="46" fill="rgb(66,0,0)"/><rect x="798" y="185" width="141" height="46" fill="rgb(46,0,0)"/><rect x="938" y="185" width="94" height="46" fill="rgb(28,0,0)"/><rect x="1032" y="185" width="47" height="46" fill="rgb(115,0,0)"/><rect x="1079" y="185" width="47" height="46" fill="rgb(46,0,0)"/><rect x="1126" y="185" width="141" height="46" fill="rgb(115,0,0)"/><rect x="1267" y="185" width="47" height="46" fill="rgb(66,0,0)"/><rect x="1314" y="185" width="47" height="46" fill="rgb(28,0,0)"/><rect x="1360" y="185" width="94" height="46" fill="rgb(46,0,0)"/><rect x="1454" y="185" width="47" height="46" fill="rgb(17,0,0)"/><rect x="1501" y="185" width="94" height="46" fill="rgb(28,0,0)"/><rect x="1595" y="185" width="47" height="46" fill="rgb(46,0,0)"/><rect x="1642" y="185" width="94" height="46" fill="rgb(66,0,0)"/><rect x="1736" y="185" width="241" height="46" fill="rgb(46,0,0)"/><rect x="-100" y="231" width="241" height="46" fill="rgb(46,0,0)"/><rect x="141" y="231" width="94" height="46" fill="rgb(66,0,0)"/><rect x="235" y="231" width="47" height="46" fill="rgb(46,0,0)"/><rect x="281" y="231" width="47" height="46" fill="rgb(17,0,0)"/><rect x="422" y="231" width="47" height="46" fill="rgb(17,0,0)"/><rect x="563" y="231" width="47" height="46" fill="rgb(17,0,0)"/><rect x="610" y="231" width="47" height="46" fill="rgb(89,0,0)"/><rect x="657" y="231" width="47" height="46" fill="rgb(46,0,0)"/><rect x="704" y="231" width="47" height="46" fill="rgb(28,0,0)"/><rect x="751" y="231" width="47" height="46" fill="rgb(46,0,0)"/><rect x="798" y="231" width="188" height="46" fill="rgb(17,0,0)"/><rect x="985" y="231" width="94" height="46" fill="rgb(28,0,0)"/><rect x="1079" y="231" width="94" height="46" fill="rgb(17,0,0)"/><rect x="1173" y="231" width="47" height="46" fill="rgb(28,0,0)"/><rect x="1220" y="231" width="94" height="46" fill="rgb(17,0,0)"/><rect x="1642" y="231" width="47" height="46" fill="rgb(17,0,0)"/><rect x="-100" y="277" width="241" height="46" fill="rgb(28,0,0)"/><rect x="141" y="277" width="47" height="46" fill="rgb(46,0,0)"/><rect x="188" y="277" width="47" height="46" fill="rgb(66,0,0)"/><rect x="235" y="277" width="47" height="46" fill="rgb(46,0,0)"/><rect x="281" y="277" width="47" height="46" fill="rgb(28,0,0)"/><rect x="328" y="277" width="47" height="46" fill="rgb(17,5,0)"/><rect x="375" y="277" width="141" height="46" fill="rgb(0,5,0)"/><rect x="516" y="277" width="94" height="46" fill="rgb(17,0,0)"/><rect x="610" y="277" width="94" height="46" fill="rgb(46,0,0)"/><rect x="704" y="277" width="47" height="46" fill="rgb(28,0,0)"/><rect x="751" y="277" width="94" height="46" fill="rgb(17,0,0)"/><rect x="844" y="277" width="47" height="46" fill="rgb(28,0,0)"/><rect x="1032" y="277" width="47" height="46" fill="rgb(46,0,0)"/><rect x="-100" y="324" width="147" height="46" fill="rgb(17,0,0)"/><rect x="47" y="324" width="47" height="46" fill="rgb(28,0,0)"/><rect x="94" y="324" width="94" height="46" fill="rgb(46,0,0)"/><rect x="188" y="324" width="47" height="46" fill="rgb(66,0,0)"/><rect x="235" y="324" width="47" height="46" fill="rgb(28,5,0)"/><rect x="281" y="324" width="94" height="46" fill="rgb(17,5,0)"/><rect x="375" y="324" width="47" height="46" fill="rgb(0,8,0)"/><rect x="422" y="324" width="47" height="46" fill="rgb(17,8,0)"/><rect x="469" y="324" width="47" height="46" fill="rgb(0,5,0)"/><rect x="516" y="324" width="94" height="46" fill="rgb(28,0,0)"/><rect x="610" y="324" width="47" height="46" fill="rgb(66,0,0)"/><rect x="657" y="324" width="47" height="46" fill="rgb(46,0,0)"/><rect x="704" y="324" width="47" height="46" fill="rgb(28,0,0)"/><rect x="751" y="324" width="47" height="46" fill="rgb(0,5,0)"/><rect x="798" y="324" width="188" height="46" fill="rgb(17,0,0)"/><rect x="1032" y="324" width="94" height="46" fill="rgb(17,0,0)"/><rect x="1126" y="324" width="47" height="46" fill="rgb(0,5,0)"/><rect x="1642" y="324" width="141" height="46" fill="rgb(0,5,0)"/><rect x="-100" y="370" width="241" height="46" fill="rgb(28,0,0)"/><rect x="141" y="370" width="47" height="46" fill="rgb(46,0,0)"/><rect x="188" y="370" width="47" height="46" fill="rgb(66,0,0)"/><rect x="235" y="370" width="94" height="46" fill="rgb(46,5,0)"/><rect x="328" y="370" width="47" height="46" fill="rgb(28,5,0)"/><rect x="375" y="370" width="141" height="46" fill="rgb(46,8,0)"/><rect x="516" y="370" width="47" height="46" fill="rgb(0,5,0)"/><rect x="563" y="370" width="47" height="46" fill="rgb(28,5,0)"/><rect x="610" y="370" width="47" height="46" fill="rgb(28,8,0)"/><rect x="657" y="370" width="47" height="46" fill="rgb(46,8,0)"/><rect x="704" y="370" width="47" height="46" fill="rgb(17,0,0)"/><rect x="1126" y="370" width="47" height="46" fill="rgb(0,5,0)"/><rect x="1220" y="370" width="47" height="46" fill="rgb(0,5,0)"/><rect x="1642" y="370" width="188" height="46" fill="rgb(0,5,0)"/><rect x="-100" y="416" width="241" height="46" fill="rgb(28,0,0)"/><rect x="141" y="416" width="94" height="46" fill="rgb(46,0,0)"/><rect x="235" y="416" width="47" height="46" fill="rgb(28,5,0)"/><rect x="281" y="416" width="47" height="46" fill="rgb(17,8,0)"/><rect x="328" y="416" width="47" height="46" fill="rgb(0,8,0)"/><rect x="375" y="416" width="141" height="46" fill="rgb(0,11,0)"/><rect x="516" y="416" width="47" height="46" fill="rgb(46,5,0)"/><rect x="563" y="416" width="47" height="46" fill="rgb(66,5,0)"/><rect x="610" y="416" width="47" height="46" fill="rgb(89,5,0)"/><rect x="657" y="416" width="47" height="46" fill="rgb(115,5,0)"/><rect x="704" y="416" width="47" height="46" fill="rgb(28,8,0)"/><rect x="751" y="416" width="141" height="46" fill="rgb(28,5,0)"/><rect x="891" y="416" width="47" height="46" fill="rgb(17,0,0)"/><rect x="1126" y="416" width="94" height="46" fill="rgb(0,5,0)"/><rect x="1220" y="416" width="47" height="46" fill="rgb(0,8,0)"/><rect x="1267" y="416" width="47" height="46" fill="rgb(0,5,0)"/><rect x="1360" y="416" width="47" height="46" fill="rgb(0,5,0)"/><rect x="1642" y="416" width="335" height="46" fill="rgb(0,5,0)"/><rect x="-100" y="462" width="194" height="46" fill="rgb(17,0,0)"/><rect x="94" y="462" width="94" height="46" fill="rgb(28,0,0)"/><rect x="188" y="462" width="47" height="46" fill="rgb(28,5,0)"/><rect x="235" y="462" width="94" height="46" fill="rgb(17,8,0)"/><rect x="328" y="462" width="47" height="46" fill="rgb(0,11,0)"/><rect x="375" y="462" width="141" height="46" fill="rgb(0,17,0)"/><rect x="516" y="462" width="47" height="46" fill="rgb(0,5,0)"/><rect x="563" y="462" width="47" height="46" fill="rgb(0,8,0)"/><rect x="610" y="462" width="141" height="46" fill="rgb(0,11,0)"/><rect x="751" y="462" width="94" height="46" fill="rgb(17,11,0)"/><rect x="844" y="462" width="94" height="46" fill="rgb(17,8,0)"/><rect x="938" y="462" width="47" height="46" fill="rgb(0,5,0)"/><rect x="1032" y="462" width="47" height="46" fill="rgb(0,5,0)"/><rect x="1079" y="462" width="47" height="46" fill="rgb(0,8,0)"/><rect x="1126" y="462" width="94" height="46" fill="rgb(0,11,0)"/><rect x="1220" y="462" width="94" height="46" fill="rgb(0,14,0)"/><rect x="1314" y="462" width="47" height="46" fill="rgb(0,5,0)"/><rect x="1360" y="462" width="141" height="46" fill="rgb(0,11,0)"/><rect x="1642" y="462" width="47" height="46" fill="rgb(0,8,0)"/><rect x="1689" y="462" width="47" height="46" fill="rgb(0,11,0)"/><rect x="1736" y="462" width="47" height="46" fill="rgb(0,14,0)"/><rect x="1783" y="462" width="47" height="46" fill="rgb(0,11,0)"/><rect x="1830" y="462" width="147" height="46" fill="rgb(0,8,0)"/><rect x="47" y="509" width="94" height="46" fill="rgb(17,0,0)"/><rect x="141" y="509" width="47" height="46" fill="rgb(17,5,0)"/><rect x="188" y="509" width="47" height="46" fill="rgb(28,8,0)"/><rect x="235" y="509" width="47" height="46" fill="rgb(17,8,0)"/><rect x="281" y="509" width="47" height="46" fill="rgb(0,8,0)"/><rect x="328" y="509" width="47" height="46" fill="rgb(0,11,0)"/><rect x="375" y="509" width="141" height="46" fill="rgb(0,17,0)"/><rect x="516" y="509" width="47" height="46" fill="rgb(0,5,0)"/><rect x="563" y="509" width="47" height="46" fill="rgb(0,11,0)"/><rect x="610" y="509" width="141" height="46" fill="rgb(0,14,0)"/><rect x="751" y="509" width="94" height="46" fill="rgb(0,11,0)"/><rect x="844" y="509" width="141" height="46" fill="rgb(0,8,0)"/><rect x="1032" y="509" width="47" height="46" fill="rgb(0,5,0)"/><rect x="1079" y="509" width="47" height="46" fill="rgb(0,8,0)"/><rect x="1126" y="509" width="94" height="46" fill="rgb(0,11,0)"/><rect x="1220" y="509" width="47" height="46" fill="rgb(0,14,0)"/><rect x="1267" y="509" width="47" height="46" fill="rgb(0,17,0)"/><rect x="1314" y="509" width="47" height="46" fill="rgb(0,5,0)"/><rect x="1360" y="509" width="141" height="46" fill="rgb(0,11,0)"/><rect x="1595" y="509" width="47" height="46" fill="rgb(0,5,0)"/><rect x="1642" y="509" width="47" height="46" fill="rgb(0,8,0)"/><rect x="1689" y="509" width="141" height="46" fill="rgb(0,14,0)"/><rect x="1830" y="509" width="147" height="46" fill="rgb(0,11,0)"/><rect x="47" y="555" width="47" height="46" fill="rgb(17,5,0)"/><rect x="94" y="555" width="94" height="46" fill="rgb(28,5,0)"/><rect x="188" y="555" width="47" height="46" fill="rgb(28,8,0)"/><rect x="235" y="555" width="47" height="46" fill="rgb(17,8,0)"/><rect x="281" y="555" width="47" height="46" fill="rgb(0,8,0)"/><rect x="328" y="555" width="47" height="46" fill="rgb(0,11,0)"/><rect x="375" y="555" width="141" height="46" fill="rgb(0,20,0)"/><rect x="516" y="555" width="47" height="46" fill="rgb(0,5,0)"/><rect x="563" y="555" width="47" height="46" fill="rgb(0,11,0)"/><rect x="610" y="555" width="141" height="46" fill="rgb(0,14,0)"/><rect x="751" y="555" width="94" height="46" fill="rgb(0,11,0)"/><rect x="844" y="555" width="141" height="46" fill="rgb(0,8,0)"/><rect x="1032" y="555" width="47" height="46" fill="rgb(0,5,0)"/><rect x="1079" y="555" width="47" height="46" fill="rgb(0,8,0)"/><rect x="1126" y="555" width="94" height="46" fill="rgb(0,11,0)"/><rect x="1220" y="555" width="47" height="46" fill="rgb(0,14,0)"/><rect x="1267" y="555" width="47" height="46" fill="rgb(0,17,0)"/><rect x="1314" y="555" width="47" height="46" fill="rgb(0,5,0)"/><rect x="1360" y="555" width="141" height="46" fill="rgb(0,11,0)"/><rect x="1595" y="555" width="47" height="46" fill="rgb(0,5,0)"/><rect x="1642" y="555" width="47" height="46" fill="rgb(0,8,0)"/><rect x="1689" y="555" width="141" height="46" fill="rgb(0,14,0)"/><rect x="1830" y="555" width="147" height="46" fill="rgb(0,11,0)"/><rect x="47" y="601" width="47" height="46" fill="rgb(0,5,0)"/><rect x="94" y="601" width="47" height="46" fill="rgb(17,5,0)"/><rect x="141" y="601" width="47" height="46" fill="rgb(28,5,0)"/><rect x="188" y="601" width="47" height="46" fill="rgb(46,8,0)"/><rect x="235" y="601" width="47" height="46" fill="rgb(17,8,0)"/><rect x="281" y="601" width="47" height="46" fill="rgb(0,8,0)"/><rect x="328" y="601" width="47" height="46" fill="rgb(0,11,0)"/><rect x="375" y="601" width="141" height="46" fill="rgb(0,20,0)"/><rect x="516" y="601" width="47" height="46" fill="rgb(0,5,0)"/><rect x="563" y="601" width="47" height="46" fill="rgb(0,11,0)"/><rect x="610" y="601" width="141" height="46" fill="rgb(0,14,0)"/><rect x="751" y="601" width="94" height="46" fill="rgb(0,11,0)"/><rect x="844" y="601" width="141" height="46" fill="rgb(0,8,0)"/><rect x="1032" y="601" width="47" height="46" fill="rgb(0,5,0)"/><rect x="1079" y="601" width="47" height="46" fill="rgb(0,8,0)"/><rect x="1126" y="601" width="94" height="46" fill="rgb(0,11,0)"/><rect x="1220" y="601" width="47" height="46" fill="rgb(0,14,0)"/><rect x="1267" y="601" width="47" height="46" fill="rgb(0,17,0)"/><rect x="1314" y="601" width="47" height="46" fill="rgb(0,5,0)"/><rect x="1360" y="601" width="141" height="46" fill="rgb(0,11,0)"/><rect x="1595" y="601" width="47" height="46" fill="rgb(0,5,0)"/><rect x="1642" y="601" width="47" height="46" fill="rgb(0,8,0)"/><rect x="1689" y="601" width="141" height="46" fill="rgb(0,14,0)"/><rect x="1830" y="601" width="147" height="46" fill="rgb(0,11,0)"/><rect x="47" y="647" width="47" height="46" fill="rgb(0,5,0)"/><rect x="94" y="647" width="47" height="46" fill="rgb(17,5,0)"/><rect x="141" y="647" width="47" height="46" fill="rgb(28,5,0)"/><rect x="188" y="647" width="47" height="46" fill="rgb(28,8,0)"/><rect x="235" y="647" width="47" height="46" fill="rgb(0,11,0)"/><rect x="281" y="647" width="47" height="46" fill="rgb(0,8,0)"/><rect x="328" y="647" width="47" height="46" fill="rgb(0,11,0)"/><rect x="375" y="647" width="141" height="46" fill="rgb(0,20,0)"/><rect x="516" y="647" width="47" height="46" fill="rgb(0,5,0)"/><rect x="563" y="647" width="47" height="46" fill="rgb(0,11,0)"/><rect x="610" y="647" width="141" height="46" fill="rgb(0,14,0)"/><rect x="751" y="647" width="94" height="46" fill="rgb(0,11,0)"/><rect x="844" y="647" width="141" height="46" fill="rgb(0,8,0)"/><rect x="1032" y="647" width="47" height="46" fill="rgb(0,5,0)"/><rect x="1079" y="647" width="47" height="46" fill="rgb(0,8,0)"/><rect x="1126" y="647" width="94" height="46" fill="rgb(0,11,0)"/><rect x="1220" y="647" width="47" height="46" fill="rgb(0,14,0)"/><rect x="1267" y="647" width="47" height="46" fill="rgb(0,17,0)"/><rect x="1314" y="647" width="47" height="46" fill="rgb(0,5,0)"/><rect x="1360" y="647" width="141" height="46" fill="rgb(0,11,0)"/><rect x="1595" y="647" width="47" height="46" fill="rgb(0,5,0)"/><rect x="1642" y="647" width="47" height="46" fill="rgb(0,8,0)"/><rect x="1689" y="647" width="141" height="46" fill="rgb(0,14,0)"/><rect x="1830" y="647" width="147" height="46" fill="rgb(0,11,0)"/><rect x="47" y="694" width="47" height="146" fill="rgb(0,5,0)"/><rect x="94" y="694" width="94" height="146" fill="rgb(17,5,0)"/><rect x="188" y="694" width="47" height="146" fill="rgb(46,8,0)"/><rect x="235" y="694" width="47" height="146" fill="rgb(17,11,0)"/><rect x="281" y="694" width="47" height="146" fill="rgb(0,8,0)"/><rect x="328" y="694" width="47" height="146" fill="rgb(0,11,0)"/><rect x="375" y="694" width="141" height="146" fill="rgb(0,20,0)"/><rect x="516" y="694" width="47" height="146" fill="rgb(0,5,0)"/><rect x="563" y="694" width="47" height="146" fill="rgb(0,11,0)"/><rect x="610" y="694" width="141" height="146" fill="rgb(0,14,0)"/><rect x="751" y="694" width="94" height="146" fill="rgb(0,11,0)"/><rect x="844" y="694" width="141" height="146" fill="rgb(0,8,0)"/><rect x="1032" y="694" width="47" height="146" fill="rgb(0,5,0)"/><rect x="1079" y="694" width="47" height="146" fill="rgb(0,8,0)"/><rect x="1126" y="694" width="94" height="146" fill="rgb(0,11,0)"/><rect x="1220" y="694" width="47" height="146" fill="rgb(0,14,0)"/><rect x="1267" y="694" width="47" height="146" fill="rgb(0,17,0)"/><rect x="1314" y="694" width="47" height="146" fill="rgb(0,5,0)"/><rect x="1360" y="694" width="141" height="146" fill="rgb(0,11,0)"/><rect x="1595" y="694" width="47" height="146" fill="rgb(0,5,0)"/><rect x="1642" y="694" width="47" height="146" fill="rgb(0,8,0)"/><rect x="1689" y="694" width="141" height="146" fill="rgb(0,14,0)"/><rect x="1830" y="694" width="147" height="146" fill="rgb(0,11,0)"/><rect x="1234" y="236" width="42" height="125" fill="rgb(115,0,0)"/><rect x="1234" y="361" width="40" height="150" fill="rgb(89,0,0)"/><rect x="1238" y="511" width="30" height="229" fill="rgb(17,14,0)"/><rect x="754" y="7" width="340" height="56" fill="rgb(66,0,235)"/><rect x="1344" y="27" width="200" height="78" fill="rgb(46,0,215)"/><rect x="1754" y="-9" width="230" height="110" fill="rgb(89,0,235)"/><rect x="24" y="19" width="290" height="46" fill="rgb(66,0,200)"/><rect x="394" y="7" width="260" height="34" fill="rgb(46,0,200)"/></g><g fill="none" stroke-linecap="round" stroke-linejoin="round" filter="url(#soft)"><path d="M158 428 L204 414 L248 396 L292 385 L336 382 L364 387" stroke="#0064ff" stroke-width="13"/><path d="M158 428 L204 414 L248 396 L292 385 L336 382 L364 387" stroke="#00e0ff" stroke-width="8"/><path d="M158 428 L204 414 L248 396 L292 385 L336 382 L364 387" stroke="#00ff40" stroke-width="4"/><path d="M354 386 L408 390 L452 396 L490 405" stroke="#0064ff" stroke-width="9"/><path d="M354 386 L408 390 L452 396 L490 405" stroke="#0090ff" stroke-width="4"/><path d="M154 444 L204 429 L248 412 L292 401 L340 398" stroke="#0064ff" stroke-width="12"/><path d="M154 444 L204 429 L248 412 L292 401 L340 398" stroke="#00e0ff" stroke-width="7"/><path d="M154 444 L204 429 L248 412 L292 401 L340 398" stroke="#00ff40" stroke-width="3"/><path d="M174 461 L234 441 L276 426 L306 424" stroke="#0064ff" stroke-width="9"/><path d="M174 461 L234 441 L276 426 L306 424" stroke="#00a0ff" stroke-width="4"/><path d="M524 428 L568 437 L612 452 L656 469 L674 477" stroke="#0064ff" stroke-width="12"/><path d="M524 428 L568 437 L612 452 L656 469 L674 477" stroke="#00e0ff" stroke-width="7"/><path d="M524 428 L568 437 L612 452 L656 469 L674 477" stroke="#00ff40" stroke-width="3.5"/><path d="M650 467 L674 477" stroke="#c8ff00" stroke-width="5"/><path d="M650 467 L674 477" stroke="#ff3000" stroke-width="2.5"/><path d="M544 446 L582 454 L626 472 L670 490" stroke="#0064ff" stroke-width="12"/><path d="M544 446 L582 454 L626 472 L670 490" stroke="#00e0ff" stroke-width="7"/><path d="M544 446 L582 454 L626 472 L670 490" stroke="#00ff40" stroke-width="3.5"/><path d="M650 482 L670 490" stroke="#c8ff00" stroke-width="5"/><path d="M650 482 L670 490" stroke="#ff3000" stroke-width="2"/><path d="M794 453 L834 448 L874 459 L914 467 L954 469" stroke="#0058e0" stroke-width="8"/><path d="M794 453 L834 448 L874 459 L914 467 L954 469" stroke="#0080ff" stroke-width="3"/><path d="M4 8V740" stroke="#0088ff" stroke-width="6" stroke-dasharray="10 7 6 9 12 8 5 12" stroke-linecap="butt" opacity="0.6"/><path d="M4 14V407" stroke="#30ff40" stroke-width="5" stroke-dasharray="5 29 7 20 4 38" stroke-linecap="butt" opacity="0.9"/><path d="M4 28V222" stroke="#ff4000" stroke-width="4" stroke-dasharray="5 50 6 90 4 70" stroke-linecap="butt"/><path d="M40 14H1856" stroke="#0068f0" stroke-width="3" stroke-dasharray="40 12 90 20 25 9 140 30 60 50 45 14 110 22 18 10" opacity="0.75"/></g><rect x="1202.0" y="0" width="5.2" height="739.9" fill="#ff0000"/><rect x="1325.2" y="0" width="5.2" height="739.9" fill="#ff0000"/><rect x="1204.5" y="168.3" width="123" height="6" fill="#ff0000"/><polyline points="984.5,739.6 990.5,724.7 996.5,709.9 1002.5,695.0 1008.5,680.2 1014.5,665.4 1020.5,650.7 1026.5,635.9 1032.5,621.2 1038.5,606.5 1044.5,591.9 1050.5,577.3 1056.5,562.7 1062.5,548.1 1068.5,533.6 1074.5,519.2 1080.5,504.8 1086.5,490.4 1092.5,476.1 1098.5,461.9 1104.5,447.8 1110.5,433.7 1116.5,419.7 1122.5,405.8 1128.5,392.0 1134.5,378.3 1140.5,364.8 1146.5,351.4 1152.5,338.1 1158.5,325.1 1164.5,312.2 1170.5,299.6 1176.5,287.2 1182.5,275.1 1188.5,263.4 1194.5,252.0 1200.5,241.1 1206.5,230.7 1212.5,220.9 1218.5,211.7 1224.5,203.2 1230.5,195.6 1236.5,188.9 1242.5,183.2 1248.5,178.7 1254.5,175.4 1260.5,173.3 1266.5,172.7 1272.5,173.3 1278.5,175.4 1284.5,178.7 1290.5,183.2 1296.5,188.9 1302.5,195.6 1308.5,203.2 1314.5,211.7 1320.5,220.9 1326.5,230.7 1332.5,241.1 1338.5,252.0 1344.5,263.4 1350.5,275.1 1356.5,287.2 1362.5,299.6 1368.5,312.2 1374.5,325.1 1380.5,338.1 1386.5,351.4 1392.5,364.8 1398.5,378.3 1404.5,392.0 1410.5,405.8 1416.5,419.7 1422.5,433.7 1428.5,447.8 1434.5,461.9 1440.5,476.1 1446.5,490.4 1452.5,504.8 1458.5,519.2 1464.5,533.6 1470.5,548.1 1476.5,562.7 1482.5,577.3 1488.5,591.9 1494.5,606.5 1500.5,621.2 1506.5,635.9 1512.5,650.7 1518.5,665.4 1524.5,680.2 1530.5,695.0 1536.5,709.9 1542.5,724.7 1548.5,739.6" fill="none" stroke="#00e0e0" stroke-width="3.3"/></svg>
</div>
</body></html>
